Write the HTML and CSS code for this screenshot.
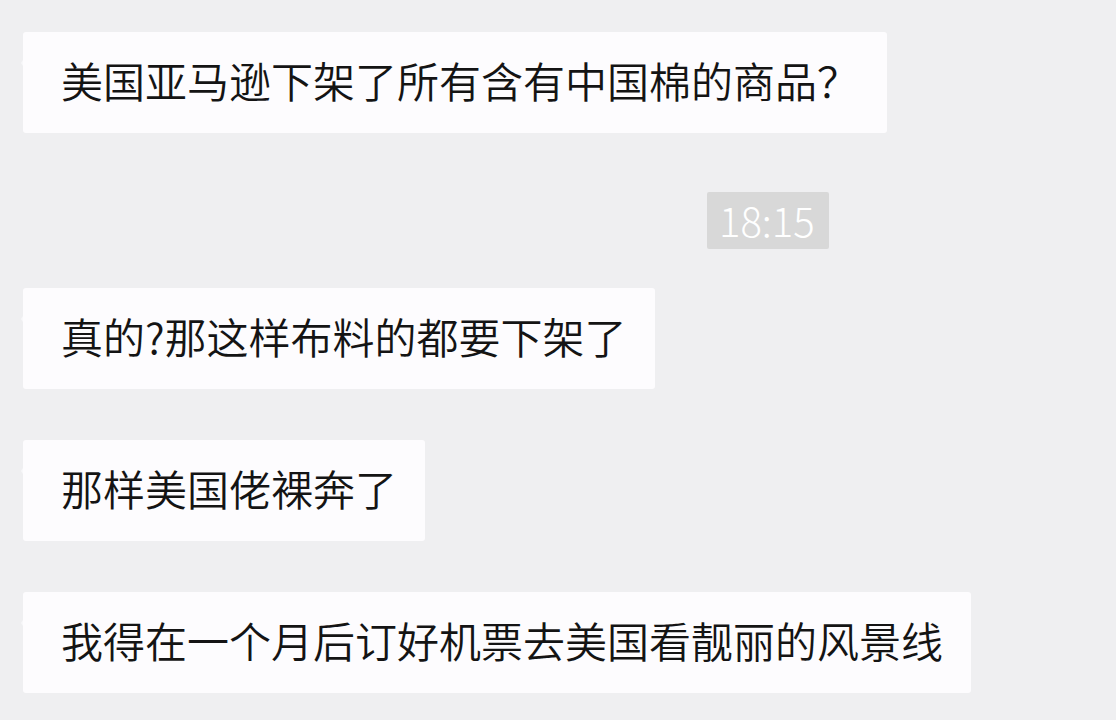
FILE: index.html
```html
<!DOCTYPE html>
<html lang="zh-CN">
<head>
<meta charset="utf-8">
<link rel="stylesheet" href="styles.css">
</head>
<body>
<div class="chat">
  <div class="row row-first"><div class="bubble">美国亚马逊下架了所有含有中国棉的商品？</div></div>
  <div class="time-row"><span class="time">18:15</span></div>
  <div class="row"><div class="bubble">真的?那这样布料的都要下架了</div></div>
  <div class="row row-gap"><div class="bubble">那样美国佬裸奔了</div></div>
  <div class="row row-gap"><div class="bubble">我得在一个月后订好机票去美国看靓丽的风景线</div></div>
</div>
</body>
</html>
```
FILE: styles.css
```css
html, body {
  margin: 0;
  padding: 0;
  background: #efeff1;
}
body {
  width: 1116px;
  height: 720px;
  overflow: hidden;
  font-family: "Noto Sans CJK SC", "Noto Sans", sans-serif;
}
.chat {
  display: flex;
  flex-direction: column;
  padding: 32px 0 0 23px;
}
.row {
  display: flex;
}
.row-gap {
  margin-top: 51px;
}
.bubble {
  position: relative;
  background: #fdfcfe;
  color: #141414;
  font-size: 42px;
  font-weight: 350;
  line-height: 45px;
  padding: 25px 28px 31px 38px;
  border-radius: 3px;
  white-space: nowrap;
}
.bubble::before {
  content: "";
  position: absolute;
  left: -2px;
  top: 28px;
  border-top: 3px solid transparent;
  border-bottom: 3px solid transparent;
  border-right: 2px solid #f8f8fa;
}
.time-row {
  display: flex;
  margin: 59px 0 39px 684px;
}
.time {
  background: #d8d8d8;
  color: #ffffff;
  font-family: "Noto Sans CJK SC", "Noto Sans", sans-serif;
  font-weight: 300;
  font-size: 40px;
  line-height: 57px;
  height: 57px;
  padding: 0 14px 0 12px;
  border-radius: 2px;
}
```
